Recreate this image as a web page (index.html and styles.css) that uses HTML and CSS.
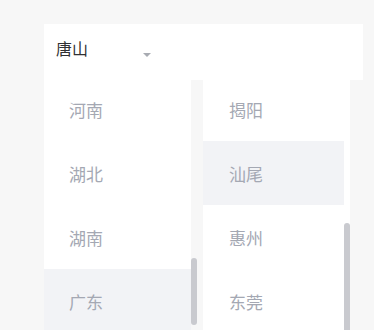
FILE: index.html
```html
<!DOCTYPE html>
<html lang="zh-CN">
<head>
  <meta charset="UTF-8">
  <title>城市选择</title>
  <meta name="viewport" content="width=device-width, initial-scale=1.0" />
  <link rel="stylesheet" href="styles.css">
</head>
<body>

<div class="picker">
  <div class="picker-head">
    <span class="picker-value">唐山</span>
    <span class="caret"></span>
  </div>

  <div class="columns">
    <div class="column">
      <div class="list">
        <div class="list-inner">
          <div class="item">河南</div>
          <div class="item">湖北</div>
          <div class="item">湖南</div>
          <div class="item active">广东</div>
        </div>
      </div>
      <div class="track">
        <div class="thumb thumb-province"></div>
      </div>
    </div>

    <div class="column">
      <div class="list list-city">
        <div class="list-inner">
          <div class="item">揭阳</div>
          <div class="item active">汕尾</div>
          <div class="item">惠州</div>
          <div class="item">东莞</div>
        </div>
      </div>
      <div class="track track-city">
        <div class="thumb thumb-city"></div>
      </div>
    </div>
  </div>
</div>

</body>
</html>
```

FILE: styles.css
```css
/* ============================
   Base
============================ */
* {
  box-sizing: border-box;
}

body {
  margin: 0;
  background: #f7f7f7;
  font-family: "Noto Sans CJK SC", "Noto Sans", sans-serif;
  height: 330px;
  overflow: hidden;
}

.picker {
  padding: 24px 0 0 44px;
}

/* ============================
   Selected value
============================ */
.picker-head {
  width: 319px;
  height: 56px;
  background: #fff;
  display: flex;
  align-items: center;
  padding-left: 12px;
}

.picker-value {
  font-size: 16px;
  color: #303133;
  width: 87px;
  margin-top: -8px;
}

.caret {
  width: 0;
  height: 0;
  border-left: 4px solid transparent;
  border-right: 4px solid transparent;
  border-top: 4px solid #a8abb2;
  margin-top: 6px;
}

/* ============================
   Columns
============================ */
.columns {
  display: flex;
  gap: 6px;
  height: 260px;
}

.column {
  display: flex;
}

.list {
  width: 147px;
  background: #fff;
  overflow: hidden;
}

.list-city {
  width: 141px;
}

.list-inner {
  margin-top: -3px;
}

.item {
  height: 64px;
  display: flex;
  align-items: center;
  padding-left: 25px;
  font-size: 17px;
  color: #a4a8b3;
}

.list-city .item {
  padding-left: 26px;
}

.item.active {
  background: #f2f3f6;
}

.track {
  width: 6px;
}

.track-city {
  background: #fff;
}

.thumb {
  width: 6px;
  border-radius: 3px;
  background: #c9cacf;
}

.thumb-province {
  margin-top: 178px;
  height: 67px;
}

.thumb-city {
  margin-top: 143px;
  height: 120px;
}
```
